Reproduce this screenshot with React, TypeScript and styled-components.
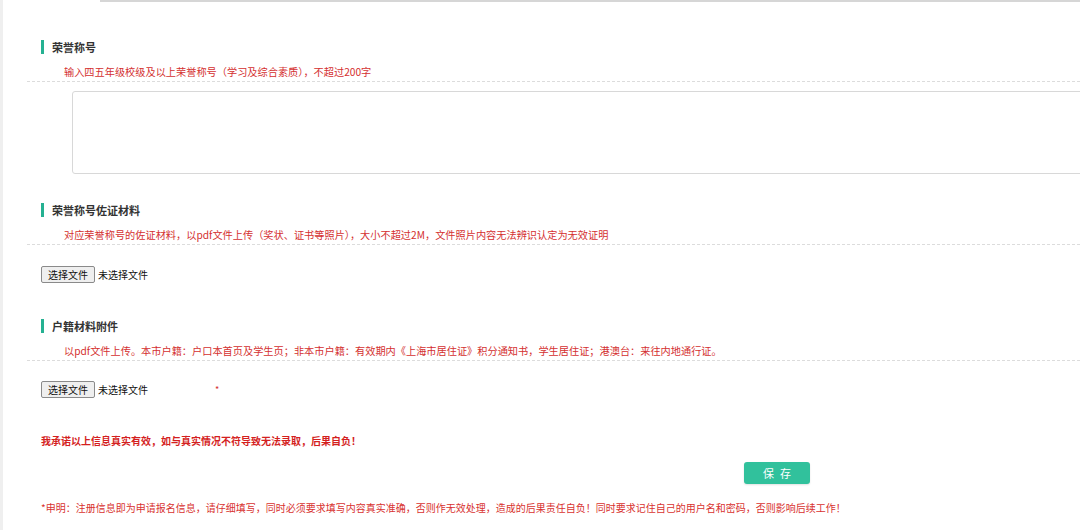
import styled, { createGlobalStyle } from "styled-components";

const GlobalStyle = createGlobalStyle`
    html, body {
        margin: 0;
        padding: 0;
        background: #ffffff;
    }
    body {
        font-family: "Noto Sans CJK SC", "Noto Sans", sans-serif;
        color: #333333;
    }
`;

const Page = styled.div`
    width: 1080px;
    height: 530px;
    overflow: hidden;
    box-sizing: border-box;
    border-left: 3px solid #efefef;
`;

const TopEdge = styled.div`
    margin-left: 97px;
    height: 0;
    border-bottom: 2px solid #d6d6d6;
`;

const Form = styled.div`
    padding-left: 38px;
    display: flex;
    flex-direction: column;
    align-items: flex-start;
`;

const SectionTitle = styled.div<{ $top: number }>`
    margin-top: ${(p) => p.$top}px;
    height: 14px;
    line-height: 14px;
    border-left: 3px solid #25b192;
    padding-left: 8px;
    font-size: 11px;
    font-weight: bold;
    color: #333333;
`;

const HintRow = styled.div`
    align-self: stretch;
    margin-top: 11px;
    margin-left: -14px;
    padding-left: 37px;
    padding-bottom: 2px;
    line-height: 14px;
    font-size: 10.2px;
    color: #d4302f;
    border-bottom: 1px dashed #dcdcdc;
    white-space: nowrap;
`;

const TextBox = styled.textarea`
    margin-top: 9px;
    margin-left: 31px;
    width: 1040px;
    height: 83px;
    box-sizing: border-box;
    border: 1px solid #d8d8d8;
    border-radius: 3px;
    resize: none;
    outline: none;
    font-family: inherit;
`;

const FileRow = styled.label<{ $top: number }>`
    margin-top: ${(p) => p.$top}px;
    display: flex;
    align-items: center;
    height: 17px;
    font-size: 10px;
    color: #111111;
    cursor: pointer;

    input {
        display: none;
    }
`;

const FileButton = styled.span`
    display: inline-flex;
    align-items: center;
    width: 54px;
    justify-content: center;
    height: 17px;
    box-sizing: border-box;
    background: #efefef;
    border: 1px solid #8a8a8a;
    border-radius: 2px;
    font-size: 10px;
    color: #111111;
`;

const FileName = styled.span<{ $width?: number }>`
    margin-left: 3px;
    width: ${(p) => (p.$width ? `${p.$width}px` : "auto")};
`;

const Star = styled.span`
    color: #d4302f;
    font-size: 9px;
    margin-left: 9px;
`;

const Promise = styled.div`
    margin-top: 36px;
    line-height: 14px;
    font-size: 10px;
    font-weight: bold;
    color: #d41f1f;
`;

const ButtonBar = styled.div`
    margin-top: 11px;
    padding-left: 703px;
`;

const SaveButton = styled.button`
    width: 66px;
    height: 22px;
    padding: 0 0 0 6px;
    border: none;
    border-radius: 3px;
    background: #31c19c;
    color: #ffffff;
    font-family: inherit;
    font-size: 11px;
    letter-spacing: 6px;
    box-shadow: 0 1px 2px rgba(0, 0, 0, 0.12);
    cursor: pointer;
`;

const Notice = styled.div`
    margin-top: 17px;
    line-height: 14px;
    font-size: 10px;
    color: #d8322f;
    white-space: nowrap;
`;

function FilePicker({ top, nameWidth, required }: { top: number; nameWidth?: number; required?: boolean }) {
    return (
        <FileRow $top={top}>
            <input type="file" accept=".pdf" />
            <FileButton>选择文件</FileButton>
            <FileName $width={nameWidth}>未选择文件</FileName>
            {required && <Star>*</Star>}
        </FileRow>
    );
}

function App() {
    return (
        <Page>
            <GlobalStyle />
            <TopEdge />
            <Form>
                <SectionTitle $top={38}>荣誉称号</SectionTitle>
                <HintRow>输入四五年级校级及以上荣誉称号（学习及综合素质），不超过200字</HintRow>
                <TextBox />

                <SectionTitle $top={29}>荣誉称号佐证材料</SectionTitle>
                <HintRow>对应荣誉称号的佐证材料，以pdf文件上传（奖状、证书等照片），大小不超过2M，文件照片内容无法辨识认定为无效证明</HintRow>
                <FilePicker top={21} />

                <SectionTitle $top={36}>户籍材料附件</SectionTitle>
                <HintRow>以pdf文件上传。本市户籍：户口本首页及学生页；非本市户籍：有效期内《上海市居住证》积分通知书，学生居住证；港澳台：来往内地通行证。</HintRow>
                <FilePicker top={20} nameWidth={108} required />

                <Promise>我承诺以上信息真实有效，如与真实情况不符导致无法录取，后果自负！</Promise>
                <ButtonBar>
                    <SaveButton type="button">保存</SaveButton>
                </ButtonBar>
                <Notice>*申明：注册信息即为申请报名信息，请仔细填写，同时必须要求填写内容真实准确，否则作无效处理，造成的后果责任自负！同时要求记住自己的用户名和密码，否则影响后续工作！</Notice>
            </Form>
        </Page>
    );
}

export default App;
